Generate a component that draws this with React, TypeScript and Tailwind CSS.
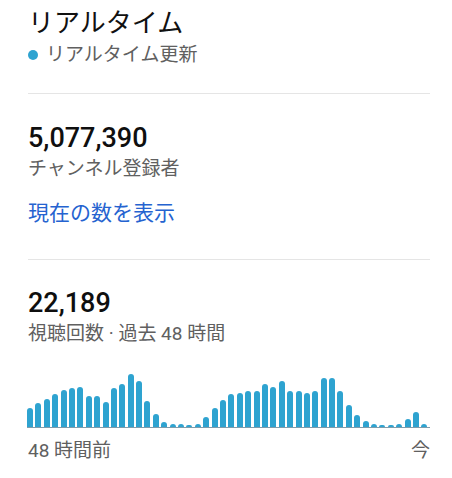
import React from "react";

const bars = [
  19, 24, 28, 33, 37, 39, 40, 31, 31, 25, 39, 43, 53, 46, 26, 13, 5, 3, 3, 2, 3, 10, 19, 27,
  33, 34, 36, 36, 43, 40, 46, 36, 36, 34, 36, 49, 49, 36, 22, 12, 6, 3, 2, 2, 3, 8, 15, 3,
];

export default function App() {
  return (
    <div
      className="w-[452px] h-[478px] bg-white overflow-hidden pl-[28px] pr-[22px]"
      style={{ fontFamily: 'Roboto, "Noto Sans CJK JP", sans-serif' }}
    >
      <div className="pt-[7px]">
        <div className="text-[26px] leading-[32px] text-[#111111]">リアルタイム</div>
        <div className="mt-[4px] flex items-center h-[24px]">
          <span className="w-[10px] h-[10px] rounded-full bg-[#2ea3d0] mr-[8px]" />
          <span className="text-[19px] leading-[24px] text-[#606060]">リアルタイム更新</span>
        </div>
      </div>
      <div className="mt-[26px] h-px bg-[#e5e5e5]" />

      <div className="pt-[28px]">
        <div className="text-[27px] leading-[32px] font-medium text-[#0f0f0f]">5,077,390</div>
        <div className="mt-[3px] text-[19px] leading-[24px] text-[#606060]">チャンネル登録者</div>
        <div className="mt-[20px] text-[21px] leading-[24px] text-[#2563d0]">現在の数を表示</div>
      </div>
      <div className="mt-[34px] h-px bg-[#e5e5e5]" />

      <div className="pt-[27px]">
        <div className="text-[27px] leading-[32px] font-medium text-[#0f0f0f]">22,189</div>
        <div className="mt-[3px] text-[19px] leading-[24px] text-[#606060]">視聴回数 · 過去 48 時間</div>
      </div>

      <div className="mt-[25px] -ml-px w-[403px]">
        <div className="h-[56px] w-[400px] flex items-end gap-[2.4px]">
          {bars.map((h, i) => (
            <div
              key={i}
              className="flex-1 rounded-t-[3px] bg-[#2ea3d0]"
              style={{ height: `${h}px` }}
            />
          ))}
        </div>
        <div className="h-px bg-[#7f9cab]" />
      </div>

      <div className="mt-[11px] flex justify-between text-[19px] leading-[24px] text-[#606060]">
        <span>48 時間前</span>
        <span>今</span>
      </div>
    </div>
  );
}
